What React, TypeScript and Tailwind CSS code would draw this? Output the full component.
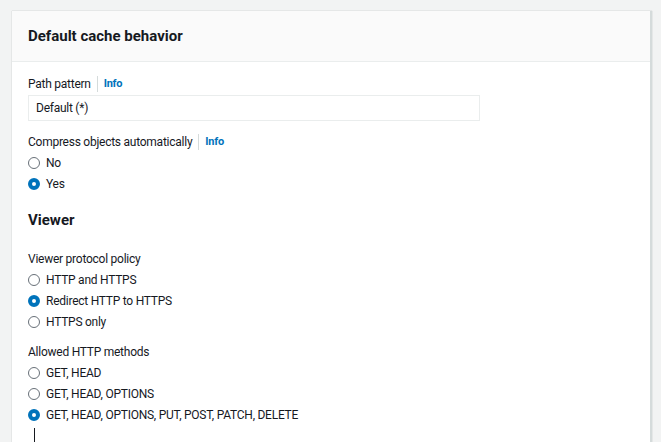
import React from "react";

type Opt = { label: string; checked?: boolean };

function Radio({ checked }: { checked?: boolean }) {
  return checked ? (
    <span className="w-[12px] h-[12px] rounded-full border-[4px] border-[#0073bb] bg-white shrink-0" />
  ) : (
    <span className="w-[12px] h-[12px] rounded-full border border-[#687078] bg-white shrink-0" />
  );
}

function RadioGroup({ options }: { options: Opt[] }) {
  return (
    <div className="flex flex-col">
      {options.map((o) => (
        <div key={o.label} className="h-[21px] flex items-center gap-[6px]">
          <Radio checked={o.checked} />
          <span>{o.label}</span>
        </div>
      ))}
    </div>
  );
}

function Label({ text, info }: { text: string; info?: boolean }) {
  return (
    <div className="h-[20px] flex items-center">
      <span>{text}</span>
      {info && (
        <>
          <span className="mx-[6px] w-px h-[16px] bg-[#d5dbdb]" />
          <span className="text-[#0073bb] font-bold text-[11px]">Info</span>
        </>
      )}
    </div>
  );
}

export default function App() {
  return (
    <div
      className="w-[661px] h-[442px] bg-[#f2f3f3] overflow-hidden pt-[11px] pl-[12px] text-[12px] tracking-[-0.25px] text-[#16191f]"
      style={{ fontFamily: "Roboto, 'Liberation Sans', sans-serif" }}
    >
      <div className="w-[640px] h-[460px] bg-white border-r-[2px] border-[#d5dbdb] shadow-[0_0_1px_0_rgba(0,28,36,0.3)]">
        <div className="h-[51px] bg-[#fafafa] border-b border-[#eaeded] px-[16px] flex items-center">
          <h2 className="text-[15px] font-bold tracking-normal">Default cache behavior</h2>
        </div>

        <div className="px-[16px] pt-[12px]">
          <Label text="Path pattern" info />
          <div className="mt-[1px] w-[452px] h-[26px] border border-[#eaeded] flex items-center px-[7px]">
            Default (*)
          </div>

          <div className="mt-[11px]">
            <Label text="Compress objects automatically" info />
            <RadioGroup options={[{ label: "No" }, { label: "Yes", checked: true }]} />
          </div>

          <h3 className="mt-[15px] h-[22px] flex items-center text-[15px] font-bold tracking-normal">Viewer</h3>

          <div className="mt-[18px]">
            <Label text="Viewer protocol policy" />
            <RadioGroup
              options={[
                { label: "HTTP and HTTPS" },
                { label: "Redirect HTTP to HTTPS", checked: true },
                { label: "HTTPS only" },
              ]}
            />
          </div>

          <div className="mt-[10px]">
            <Label text="Allowed HTTP methods" />
            <RadioGroup
              options={[
                { label: "GET, HEAD" },
                { label: "GET, HEAD, OPTIONS" },
                { label: "GET, HEAD, OPTIONS, PUT, POST, PATCH, DELETE", checked: true },
              ]}
            />
          </div>

          <div className="ml-[6px] mt-[3px] w-px h-[20px] bg-[#16191f]" />
        </div>
      </div>
    </div>
  );
}
